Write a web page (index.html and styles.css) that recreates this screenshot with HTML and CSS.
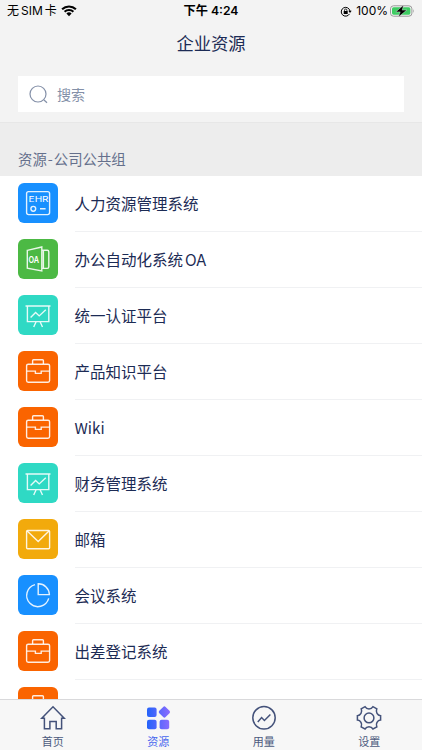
FILE: index.html
```html
<!DOCTYPE html>
<html lang="zh-CN">
<head>
    <meta charset="utf-8">
    <title>企业资源</title>
    <meta name="viewport" content="width=device-width, initial-scale=1">
    <link rel="stylesheet" href="styles.css">
</head>
<body>
    <svg class="defs">
        <symbol id="ehr" viewBox="0 0 40 40">
            <rect x="8.6" y="8.6" width="23" height="23" rx="2"/>
            <text x="10.6" y="19.2" textLength="20" lengthAdjust="spacingAndGlyphs">EHR</text>
            <circle cx="15.3" cy="25.8" r="2.4"/>
            <path d="M22 25.8h5.6"/>
        </symbol>
        <symbol id="oa" viewBox="0 0 40 40">
            <path d="M9.3 11.4 23.8 8v24L9.3 29.2zM24 11.2h5.2q1.6 0 1.6 1.6v15q0 1.6-1.6 1.6H24M25.4 11.5v17.5"/>
            <text class="oa" x="10.4" y="23.9" textLength="10.6" lengthAdjust="spacingAndGlyphs">OA</text>
        </symbol>
        <symbol id="board" viewBox="0 0 40 40">
            <path d="M7.5 11h25M9.4 11v15.6h21.4V11M12.6 22.4l5-4.9 3.6 3.4 6.6-6.2M18 27l-2.3 5M22.2 27l2.3 5"/>
        </symbol>
        <symbol id="case" viewBox="0 0 40 40">
            <rect x="8.6" y="13.2" width="23" height="18" rx="1.6"/>
            <path d="M14.6 13V9.7q0-.9.9-.9h9q.9 0 .9.9V13M8.6 20.1h8.8v2.3h5.8v-2.3h8.4"/>
        </symbol>
        <symbol id="mail" viewBox="0 0 40 40">
            <rect x="8.6" y="11.5" width="23" height="18.2" rx="1"/>
            <path d="m9.2 12 11 10.6L31 12"/>
        </symbol>
        <symbol id="pie" viewBox="0 0 40 40">
            <path d="M17 9.6A11.2 11.2 0 1 0 30.7 23.4M20.2 8.8v10.8h11.2A11 11 0 0 0 20.2 8.8z"/>
        </symbol>
    </svg>

    <header>
        <div class="status">
            <div class="carrier">
                <span>无<i>SIM</i>卡</span>
                <svg width="16" height="12" viewBox="0 0 16 12">
                    <path d="M1.1 4.3a9.9 9.9 0 0 1 13.8 0M3.6 6.8a6.3 6.3 0 0 1 8.8 0" fill="none" stroke="#000" stroke-width="2.1"/>
                    <path d="M5.4 8.6a3.7 3.7 0 0 1 5.2 0L8 11.3z"/>
                </svg>
            </div>
            <div class="clock">下午 4:24</div>
            <div class="power">
                <svg width="12" height="11" viewBox="0 0 12 11">
                    <path d="M9.5 7.9A4.4 4.4 0 1 1 10 5.1" fill="none" stroke="#000"/>
                    <path d="M8.3 4.7h3.4L10 7zM3.7 5h4v2.9h-4z"/>
                    <path d="M4.5 5V4.2a1.2 1.2 0 0 1 2.4 0V5" fill="none" stroke="#000" stroke-width=".8"/>
                </svg>
                <span>100%</span>
                <svg width="25" height="12" viewBox="0 0 25 12">
                    <rect x=".5" y=".8" width="21.4" height="10.4" rx="3" fill="none" stroke="#999"/>
                    <rect x="2" y="2.3" width="18.4" height="7.4" rx="1.6" fill="#3dcc62"/>
                    <path d="M23.2 4.1q1.5 1.9 0 3.8z" fill="#999"/>
                    <path d="M13.6 0 5.8 6.9h4.4L8.4 12l8.4-6.9h-4.6z" stroke="#f3f3f3" stroke-width=".4"/>
                </svg>
            </div>
        </div>
        <h1>企业资源</h1>
        <div class="search">
            <svg width="20" height="20" viewBox="0 0 20 20">
                <circle cx="9" cy="9" r="8"/>
                <path d="m15 15 3 2.8"/>
            </svg>
            <span>搜索</span>
        </div>
    </header>

    <main>
        <h2>资源<b>-</b>公司公共组</h2>
        <ul>
            <li><svg class="icon blue"><use href="#ehr"/></svg><span>人力资源管理系统</span></li>
            <li><svg class="icon green"><use href="#oa"/></svg><span>办公自动化系统<i>OA</i></span></li>
            <li><svg class="icon teal"><use href="#board"/></svg><span>统一认证平台</span></li>
            <li><svg class="icon orange"><use href="#case"/></svg><span>产品知识平台</span></li>
            <li><svg class="icon orange"><use href="#case"/></svg><span class="latin">Wiki</span></li>
            <li><svg class="icon teal"><use href="#board"/></svg><span>财务管理系统</span></li>
            <li><svg class="icon yellow"><use href="#mail"/></svg><span>邮箱</span></li>
            <li><svg class="icon blue"><use href="#pie"/></svg><span>会议系统</span></li>
            <li><svg class="icon orange"><use href="#case"/></svg><span>出差登记系统</span></li>
            <li><svg class="icon orange"><use href="#case"/></svg><span></span></li>
        </ul>
    </main>

    <nav>
        <a>
            <svg viewBox="0 0 26 26"><path d="M4.4 13.2H1.8L13 1.8l11.2 11.4h-2.6v10.6h-5.4v-7.4H9.9v7.4H4.4z"/></svg>
            首页
        </a>
        <a class="active">
            <svg viewBox="0 0 26 26">
                <defs>
                    <linearGradient id="grad" gradientUnits="userSpaceOnUse" x1="2" y1="0" x2="25" y2="0">
                        <stop offset="0" stop-color="#2463fa"/>
                        <stop offset="1" stop-color="#8b6cff"/>
                    </linearGradient>
                </defs>
                <rect x="2" y="2.4" width="9.6" height="9.6" rx="2"/>
                <rect x="2" y="14.7" width="9.6" height="9.6" rx="2"/>
                <rect x="14.6" y="14.7" width="9.6" height="9.6" rx="2"/>
                <path d="M18.2 1.9q1.2-1.2 2.4 0l3.9 3.9q1.2 1.2 0 2.4l-3.9 3.9q-1.2 1.2-2.4 0l-3.9-3.9q-1.2-1.2 0-2.4z"/>
            </svg>
            资源
        </a>
        <a>
            <svg viewBox="0 0 26 26"><circle cx="13" cy="12.8" r="11.2"/><path d="m6.8 17 3.8-4.4 2.8 2.9 6-6"/></svg>
            用量
        </a>
        <a>
            <svg viewBox="0 0 26 26">
                <path d="M9 1.7Q10.4 3.9 13 3.9T17 1.7l3.8 2.1q-1 2.5.2 4.6t3.6 2.3v4.4q-2.4.2-3.6 2.3t-.2 4.5L17 24q-1.4-2.2-4-2.2T9 24l-3.8-2.1q1-2.4-.2-4.5t-3.6-2.3v-4.4Q3.800 10.500 5 8.400T5.200 3.800z"/>
                <circle cx="13" cy="12.900" r="4.900"/>
            </svg>
            设置
        </a>
    </nav>
</body>
</html>
```
FILE: styles.css
```css
* { box-sizing: border-box; }
body { display: flex; flex-direction: column; height: 750px; margin: 0; overflow: hidden; background: #fff; color: #1c2b55; font-family: 'Noto Sans CJK SC', sans-serif; }
i { font-family: Inter, sans-serif; font-style: normal; }
.defs { display: none; }

header { flex: none; height: 122px; background: #f3f3f3; }
.status { display: grid; grid-template-columns: 1fr auto 1fr; align-items: center; height: 22px; padding: 0 7px; color: #000; font: 12px/22px Inter, 'Noto Sans CJK SC', sans-serif; }
.carrier, .power { display: flex; align-items: center; }
.carrier { gap: 4px; }
.carrier i { margin: 0 2px; }
.clock { font-weight: 600; font-size: 12.2px; }
.power { justify-content: flex-end; }
.power span { margin: 0 2px 0 4px; }
h1 { height: 42px; margin: 0; font-size: 17.3px; font-weight: 400; line-height: 42px; text-align: center; }
.search { display: flex; align-items: center; gap: 8px; height: 36px; margin: 12px 18px 0; padding-left: 11px; background: #fff; color: #8490a8; font-size: 14px; line-height: 20px; }
.search svg { margin-top: 2px; fill: none; stroke: #8490a8; stroke-width: 1.2; }
.search span { margin-top: -1px; }

main { flex: 1; min-height: 0; overflow: hidden; }
h2 { height: 54px; margin: 0; padding: 20px 18px 0; border-top: 1px solid #e7e7e7; background: #ededed; color: #65708c; font-size: 14.4px; font-weight: 400; line-height: 31px; }
h2 b { margin: 0 1px; font-weight: 400; }
ul { margin: 0; padding: 0; list-style: none; }
li { display: flex; gap: 16.5px; height: 56px; padding-left: 18px; font-size: 15.5px; line-height: 55px; }
li span { flex: 1; border-bottom: 1px solid #f0f1f3; }
li i { margin-left: 2px; font-size: 15.2px; }
.latin { font-size: 15.2px; }
.icon { flex: none; width: 40px; height: 40px; margin-top: 7.4px; border-radius: 6px; fill: none; stroke: #fff; stroke-opacity: .88; stroke-width: 1.4; }
.icon text, symbol text { fill: #fff; stroke: none; font: 400 7.5px Inter, sans-serif; }
symbol .oa { font-weight: 600; font-size: 8.5px; }
.blue { background: #1890ff; }
.green { background: #4cb944; }
.teal { background: #2fd9c4; }
.orange { background: #fa6400; }
.yellow { background: #f2aa0c; }

nav { display: grid; flex: none; grid-template-columns: repeat(4, 1fr); height: 51px; border-top: 1px solid #d9d9db; background: #f7f7f7; }
nav a { display: flex; flex-direction: column; align-items: center; padding-top: 5px; color: #4c5a7d; font-size: 11px; line-height: 20px; }
nav svg { width: 26px; height: 26px; fill: none; stroke: #44527a; stroke-width: 1.5; }
nav .active { color: #4968ee; }
nav .active svg { fill: url(#grad); stroke: none; }
```
